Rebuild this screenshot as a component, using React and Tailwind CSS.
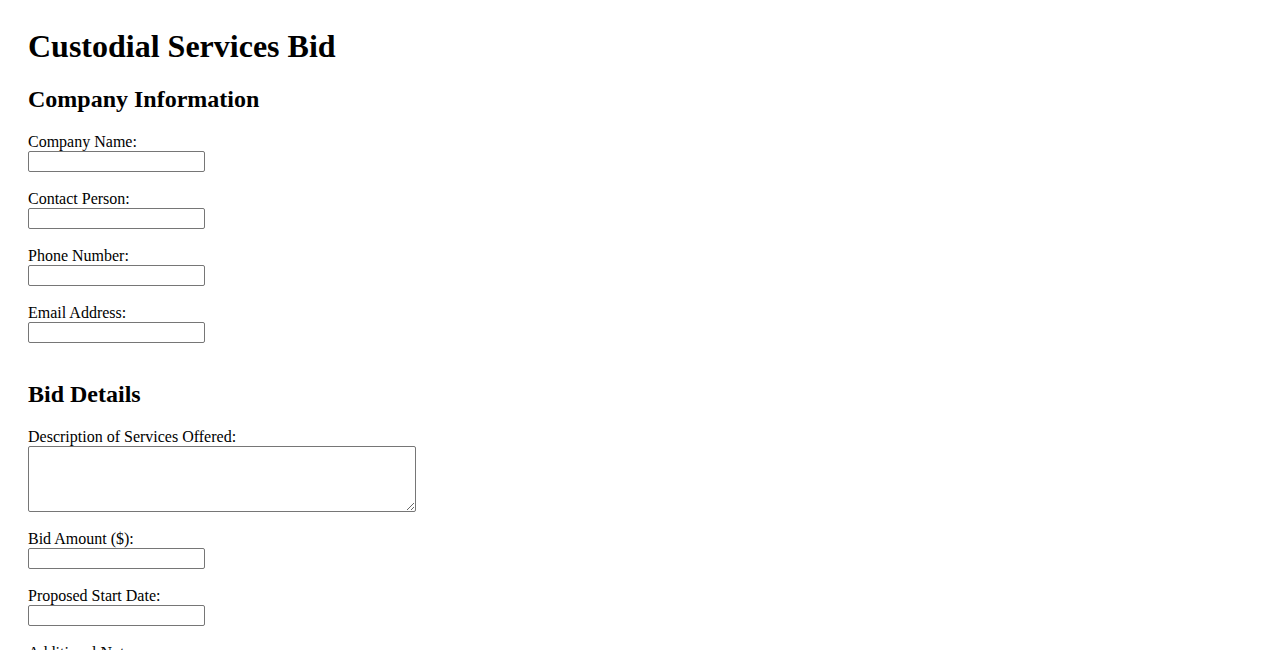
import React from 'react';

const companyFields = ['Company Name:', 'Contact Person:', 'Phone Number:', 'Email Address:'];

function Field({ label, children }) {
  return (
    <div className="flex flex-col items-start">
      <label className="text-[16px] leading-[18px]">{label}</label>
      {children}
    </div>
  );
}

function TextInput() {
  return (
    <input
      type="text"
      className="w-[177px] h-[21px] border border-[#767676] rounded-[2px] bg-white px-[2px] text-[13px]"
    />
  );
}

export default function App() {
  return (
    <div className="bg-white min-h-screen text-black px-[28px] pt-[28px] pb-10" style={{ fontFamily: '"Liberation Serif", "Times New Roman", serif' }}>
      <h1 className="text-[32px] font-bold leading-[37px] mb-[20px]">Custodial Services Bid</h1>

      {/* Company Information */}
      <h2 className="text-[24px] font-bold leading-[28px] mb-[20px]">Company Information</h2>
      <div className="flex flex-col gap-[18px]">
        {companyFields.map((f) => (
          <Field key={f} label={f}>
            <TextInput />
          </Field>
        ))}
      </div>

      {/* Bid Details */}
      <h2 className="text-[24px] font-bold leading-[28px] mt-[37px] mb-[20px]">Bid Details</h2>
      <div className="flex flex-col gap-[18px]">
        <Field label="Description of Services Offered:">
          <textarea className="w-[388px] h-[66px] border border-[#767676] rounded-[2px] bg-white resize" />
        </Field>
        <Field label="Bid Amount ($):">
          <TextInput />
        </Field>
        <Field label="Proposed Start Date:">
          <TextInput />
        </Field>
        <Field label="Additional Notes:">
          <textarea className="w-[388px] h-[66px] border border-[#767676] rounded-[2px] bg-white resize" />
        </Field>
      </div>
    </div>
  );
}
